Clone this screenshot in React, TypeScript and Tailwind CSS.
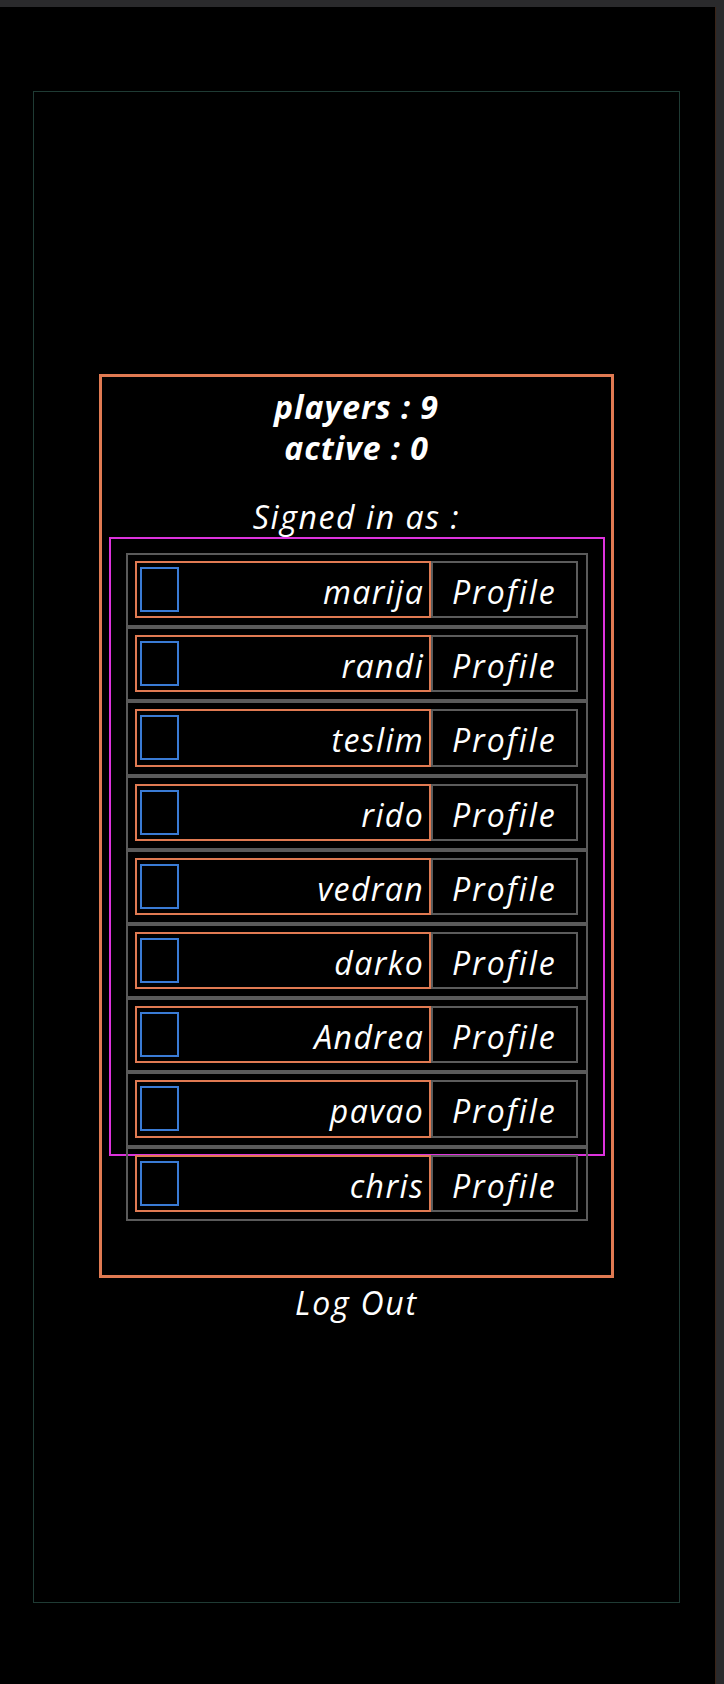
const players = ['marija', 'randi', 'teslim', 'rido', 'vedran', 'darko', 'Andrea', 'pavao', 'chris']

function PlayerRow({ name }: { name: string }) {
  return (
    <li className="flex h-[74.2px] border-2 border-[#5a5a5a] pl-[7px] pr-[8px] pt-[6px] pb-[7px]">
      <div className="flex flex-[2] items-center justify-between border-2 border-[#e07a52] pl-[3px] pr-[5px]">
        <div className="h-[45px] w-[39px] border-2 border-[#3a7bd5]" />
        <span className="pt-[4px] italic tracking-[1.4px]">{name}</span>
      </div>
      <button className="flex flex-1 items-center justify-center border-2 border-[#5c5c5c] pt-[4px] italic tracking-[2px]">
        Profile
      </button>
    </li>
  )
}

export default function App() {
  return (
    <div className="flex h-[1684px] w-[724px] flex-col bg-black font-['Open_Sans',sans-serif] text-[32px] leading-[41px] text-white">
      <div className="h-[7px] bg-[#2a2a2c]" />
      <div className="flex flex-1">
        <main className="flex-1 border-r border-[#3a2418]">
          <div className="ml-[33px] mt-[84px] flex h-[1512px] w-[647px] flex-col items-center border border-[#1f3b34] pt-[282px]">
            <section className="flex h-[904px] w-[515px] flex-col items-center border-[3px] border-[#e07a52] pt-[9px]">
              <p className="font-bold italic tracking-[1px]">players : 9</p>
              <p className="font-bold italic tracking-[1px]">active : 0</p>
              <p className="mt-[28px] italic tracking-[1.6px]">Signed in as :</p>
              <div className="h-[619px] w-[496px] border-2 border-[#dd33dd] px-[15px] pt-[14px]">
                <ul className="flex flex-col">
                  {players.map((p) => (
                    <PlayerRow key={p} name={p} />
                  ))}
                </ul>
              </div>
            </section>
            <button className="mt-[4px] italic tracking-[1.8px]">Log Out</button>
          </div>
        </main>
        <div className="w-[8px] bg-[#2a2a2c]" />
      </div>
    </div>
  )
}
